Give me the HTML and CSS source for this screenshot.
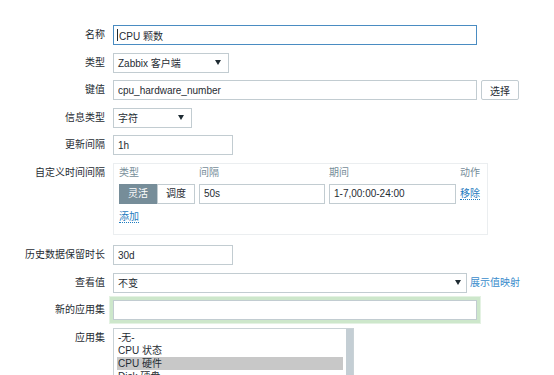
FILE: index.html
```html
<!DOCTYPE html>
<html lang="zh-CN">
<head>
  <meta charset="UTF-8" />
  <title>监控项</title>
  <link rel="stylesheet" href="styles.css">
</head>
<body>

<form class="item-form">

  <div class="row">
    <label class="lbl">名称</label>
    <div class="field-wrap">
      <input class="input w-wide focus" type="text" value="CPU 颗数">
      <span class="caret"></span>
    </div>
  </div>

  <div class="row">
    <label class="lbl">类型</label>
    <div class="select w-type"><span>Zabbix 客户端</span><i class="arrow"></i></div>
  </div>

  <div class="row">
    <label class="lbl">键值</label>
    <input class="input w-wide" type="text" value="cpu_hardware_number">
    <button type="button" class="btn">选择</button>
  </div>

  <div class="row">
    <label class="lbl">信息类型</label>
    <div class="select w-info"><span>字符</span><i class="arrow"></i></div>
  </div>

  <div class="row">
    <label class="lbl">更新间隔</label>
    <input class="input w-short" type="text" value="1h">
  </div>

  <div class="row row-intervals">
    <label class="lbl">自定义时间间隔</label>
    <div class="intervals">
      <div class="iv-grid">
        <div class="iv-head">类型</div>
        <div class="iv-head">间隔</div>
        <div class="iv-head">期间</div>
        <div class="iv-head">动作</div>

        <div class="seg">
          <span class="seg-btn on">灵活</span>
          <span class="seg-btn">调度</span>
        </div>
        <input class="input" type="text" value="50s">
        <input class="input" type="text" value="1-7,00:00-24:00">
        <div class="iv-act"><a class="link" href="#">移除</a></div>
      </div>
      <div class="iv-add"><a class="link" href="#">添加</a></div>
    </div>
  </div>

  <div class="row">
    <label class="lbl">历史数据保留时长</label>
    <input class="input w-short" type="text" value="30d">
  </div>

  <div class="row">
    <label class="lbl">查看值</label>
    <div class="select w-view"><span>不变</span><i class="arrow"></i></div>
    <a class="map-link" href="#">展示值映射</a>
  </div>

  <div class="row">
    <label class="lbl">新的应用集</label>
    <input class="input w-wide glow" type="text" value="">
  </div>

  <div class="row">
    <label class="lbl">应用集</label>
    <div class="listbox">
      <ul class="opts">
        <li>-无-</li>
        <li>CPU 状态</li>
        <li class="sel">CPU 硬件</li>
        <li>Disk 硬盘</li>
        <li>Filesystems</li>
      </ul>
      <div class="scroll"></div>
    </div>
  </div>

</form>

</body>
</html>
```

FILE: styles.css
```css
body {
  margin: 0;
  font-family: "Liberation Sans", Arial, "Noto Sans CJK SC", sans-serif;
  font-size: 10px;
  color: #1f2c33;
  background: #ffffff;
  overflow: hidden;
}
.item-form {
  padding-top: 25px;
}
.row {
  display: flex;
  align-items: flex-start;
  margin-bottom: 7.5px;
}
.lbl {
  width: 105px;
  margin-right: 8px;
  flex-shrink: 0;
  text-align: right;
  line-height: 20px;
}
.input {
  box-sizing: border-box;
  height: 20px;
  padding: 0 4px;
  border: 1px solid #c2ccd1;
  background: #fff;
  font-family: inherit;
  font-size: 10px;
  color: #1f2c33;
  outline: none;
}
.w-wide { width: 364px; }
.w-short { width: 120px; }
.focus {
  border-color: #4a8cc2;
  padding-left: 5px;
}
.field-wrap {
  position: relative;
}
.caret {
  position: absolute;
  left: 4px;
  top: 4px;
  width: 1px;
  height: 12px;
  background: #1f2c33;
}
.glow {
  box-shadow: 0 0 0 3px #cde7cb, 0 0 0 4px #e4f2e3;
}

/* fake selects */
.select {
  box-sizing: border-box;
  height: 20px;
  padding: 0 7px 0 4px;
  border: 1px solid #c2ccd1;
  display: flex;
  align-items: center;
  justify-content: space-between;
}
.w-type { width: 116px; }
.w-info { width: 79px; }
.w-view { width: 354px; padding-right: 5px; }
.arrow {
  width: 0;
  height: 0;
  border-left: 3px solid transparent;
  border-right: 3px solid transparent;
  border-top: 5px solid #1f2c33;
}

.btn {
  box-sizing: border-box;
  height: 20px;
  width: 38px;
  margin-left: 4px;
  padding: 0;
  border: 1px solid #c2ccd1;
  border-radius: 2px;
  background: #fff;
  font-family: inherit;
  font-size: 10px;
  color: #1f2c33;
}

/* custom intervals box */
.row-intervals {
  margin-bottom: 10.5px;
}
.intervals {
  box-sizing: border-box;
  width: 375px;
  height: 72px;
  padding: 1px 5px 0;
  border: 1px solid #ebeef0;
}
.iv-grid {
  display: grid;
  grid-template-columns: 76px 126px 127px 1fr;
  column-gap: 4px;
  row-gap: 4px;
}
.iv-head {
  line-height: 15px;
  color: #768d99;
}
.iv-head:last-child {
  text-align: right;
}
.seg {
  display: flex;
}
.seg-btn {
  box-sizing: border-box;
  width: 38px;
  height: 20px;
  line-height: 18px;
  text-align: center;
  border: 1px solid #c2ccd1;
  background: #fff;
}
.seg-btn.on {
  background: #768d99;
  border-color: #768d99;
  color: #fff;
}
.iv-act {
  line-height: 20px;
}
.iv-add {
  margin-top: 5px;
  line-height: 16px;
}
.link {
  color: #1f7cc0;
  text-decoration: none;
  border-bottom: 1px dotted #1f7cc0;
}
.map-link {
  margin-left: 3px;
  line-height: 20px;
  color: #3a8ccc;
  text-decoration: none;
}

/* application list */
.listbox {
  display: flex;
  width: 241px;
  height: 90px;
  border: 1px solid #c9d2d6;
  box-sizing: border-box;
}
.opts {
  list-style: none;
  margin: 0;
  padding: 2px 0 0 3px;
  width: 226px;
}
.opts li {
  line-height: 13px;
  padding-left: 1px;
}
.opts li.sel {
  background: #c8c8c8;
}
.scroll {
  margin-left: auto;
  width: 7px;
  background: #c4ced4;
}
```
